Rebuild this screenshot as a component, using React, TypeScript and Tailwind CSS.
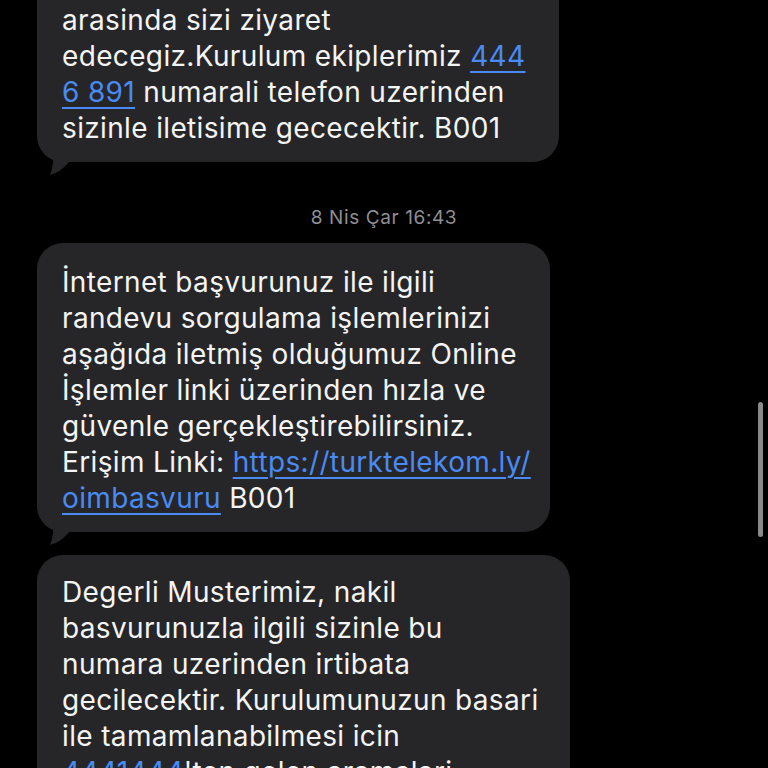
import React from "react";

const font = { fontFamily: "Inter, 'Liberation Sans', sans-serif" };

function Tail() {
    return (
        <svg
            width="40"
            height="32"
            viewBox="0 0 40 32"
            className="absolute bottom-[-16px] left-0"
            aria-hidden="true"
        >
            <path
                d="M16 2 C17 13 16 21 13 29 C21 27 27 22 33 15 L33 2 Z"
                fill="#262628"
            />
        </svg>
    );
}

function Link({ children }: { children: React.ReactNode }) {
    return (
        <span className="text-[#4a8af4] underline decoration-2 underline-offset-[5px]">
            {children}
        </span>
    );
}

function Bubble({
    width,
    className,
    children,
}: {
    width: string;
    className?: string;
    children: React.ReactNode;
}) {
    return (
        <div
            className={`relative rounded-[26px] bg-[#262628] pl-[25px] pr-3 pb-4 text-[28px] leading-[36px] tracking-[0.35px] text-[#f4f4f4] ${width} ${className ?? ""}`}
        >
            {children}
            <Tail />
        </div>
    );
}

export default function App() {
    return (
        <div
            className="relative h-[768px] w-[768px] overflow-hidden bg-black"
            style={font}
        >
            <div className="flex flex-col items-start pl-[37px]">
                <Bubble width="w-[522px]" className="-mt-[40px] pt-[42px]">
                    arasinda sizi ziyaret
                    <br />
                    edecegiz.Kurulum ekiplerimiz <Link>444</Link>
                    <br />
                    <Link>6 891</Link> numarali telefon uzerinden
                    <br />
                    sizinle iletisime gececektir. B001
                </Bubble>

                <div className="mt-[44px] mb-[13px] w-[694px] text-center text-[19px] leading-[24px] tracking-[0.6px] text-[#8e8e93]">
                    8 Nis Çar 16:43
                </div>

                <Bubble width="w-[513px]" className="pt-[21px]">
                    İnternet başvurunuz ile ilgili
                    <br />
                    randevu sorgulama işlemlerinizi
                    <br />
                    aşağıda iletmiş olduğumuz Online
                    <br />
                    İşlemler linki üzerinden hızla ve
                    <br />
                    güvenle gerçekleştirebilirsiniz.
                    <br />
                    Erişim Linki: <Link>https://turktelekom.ly/</Link>
                    <br />
                    <Link>oimbasvuru</Link> B001
                </Bubble>

                <Bubble width="w-[533px]" className="mt-[23px] pt-[19px]">
                    Degerli Musterimiz, nakil
                    <br />
                    basvurunuzla ilgili sizinle bu
                    <br />
                    numara uzerinden irtibata
                    <br />
                    gecilecektir. Kurulumunuzun basari
                    <br />
                    ile tamamlanabilmesi icin
                    <br />
                    <Link>4441444</Link>'ten gelen aramalari
                    <br />
                    yanitlamanizi rica ederiz. B001
                </Bubble>
            </div>

            <div className="absolute right-[5px] top-[402px] h-[135px] w-[5px] rounded-full bg-[#8a8a8a]" />
        </div>
    );
}
